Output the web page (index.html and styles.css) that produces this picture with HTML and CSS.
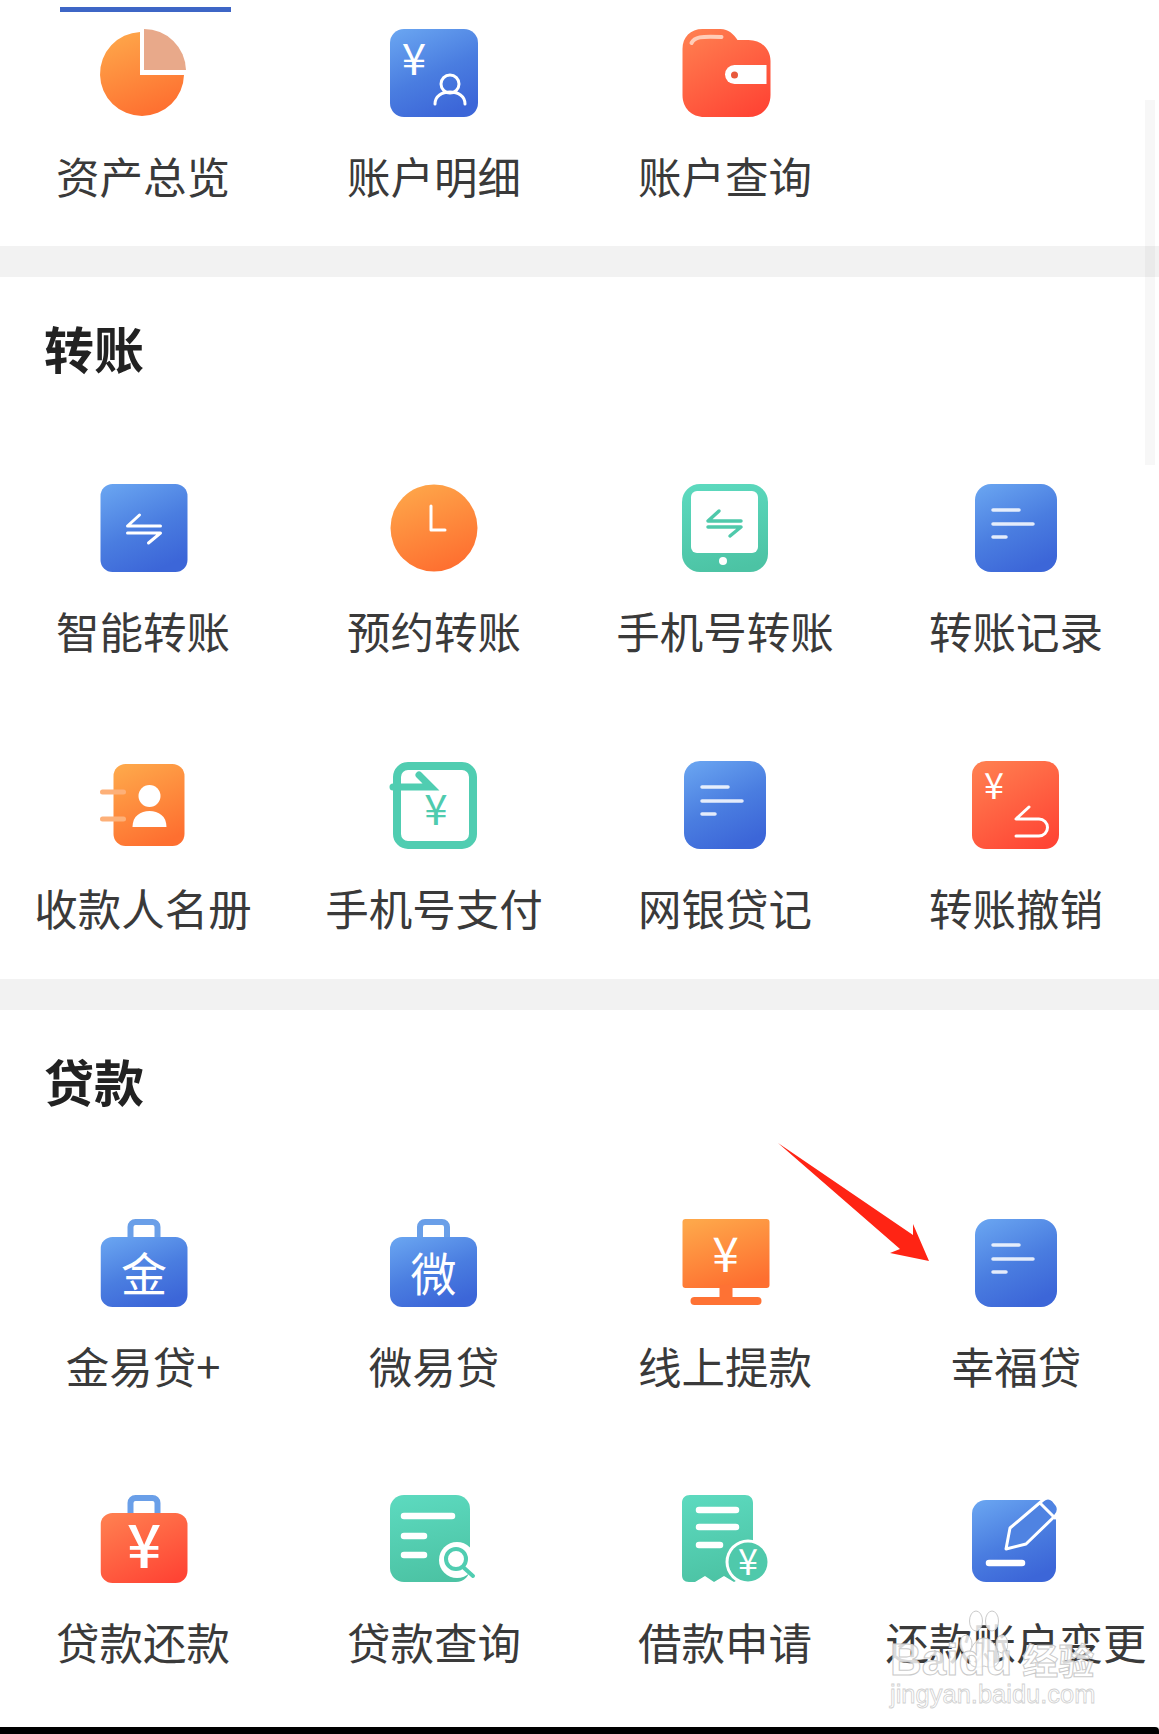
FILE: index.html
```html
<!DOCTYPE html>
<html lang="zh-CN">
<head>
  <meta charset="UTF-8" />
  <meta name="viewport" content="width=device-width, initial-scale=1.0" />
  <title>全部功能</title>
  <link rel="stylesheet" href="styles.css">
</head>
<body>
  <svg class="svg-defs" width="0" height="0" aria-hidden="true">
    <defs>
      <linearGradient id="g-blue" x1="0.15" y1="0" x2="0.6" y2="1">
        <stop offset="0" stop-color="#68a3f0" />
        <stop offset="0.55" stop-color="#4a7de0" />
        <stop offset="1" stop-color="#3c66d8" />
      </linearGradient>
      <linearGradient id="g-orange" x1="0.2" y1="0" x2="0.6" y2="1">
        <stop offset="0" stop-color="#fea74a" />
        <stop offset="1" stop-color="#fe6f30" />
      </linearGradient>
      <linearGradient id="g-red" x1="0.2" y1="0" x2="0.8" y2="1">
        <stop offset="0" stop-color="#ff7d4f" />
        <stop offset="1" stop-color="#ff4434" />
      </linearGradient>
      <linearGradient id="g-teal" x1="0.3" y1="0" x2="0.5" y2="1">
        <stop offset="0" stop-color="#5cd9be" />
        <stop offset="1" stop-color="#4cc3a4" />
      </linearGradient>
      <symbol id="i-doc" viewBox="0 0 88 88">
        <rect x="3" width="82" height="88" rx="16" fill="url(#g-blue)" />
        <path class="line-w soft" d="M21 26H47M21 40H61M21 53H34" />
      </symbol>
      <symbol id="i-case" viewBox="0 0 88 88">
        <rect x="30" y="3" width="27" height="22" rx="5" class="case-handle" />
        <rect y="18" width="87" height="70" rx="12" />
      </symbol>
    </defs>
  </svg>

  <div class="page">
    <section class="panel panel-first">
      <div class="tab-line"></div>
      <div class="grid">
        <div class="item">
          <svg class="icon" viewBox="0 0 88 88">
            <path d="M41 3A42 42 0 1 0 85 46H41Z" fill="url(#g-orange)" />
            <path d="M45 0A42 42 0 0 1 87 41H45Z" fill="#e8a98a" />
          </svg>
          <div class="label">资产总览</div>
        </div>
        <div class="item">
          <svg class="icon" viewBox="0 0 88 88">
            <rect width="88" height="88" rx="14" fill="url(#g-blue)" />
            <text class="glyph" x="24" y="46" font-size="44">¥</text>
            <circle class="line-w thin" cx="60" cy="55" r="9" />
            <path class="line-w thin" d="M45 75C45 67 52 63 60 63S75 67 75 75" />
          </svg>
          <div class="label">账户明细</div>
        </div>
        <div class="item">
          <svg class="icon nudge" viewBox="0 0 88 88">
            <path d="M20 0H38C46 0 51 5 55 11H66C79 11 88 20 88 32V66C88 79 79 88 66 88H22C9 88 0 79 0 66V20C0 8 8 0 20 0Z" fill="url(#g-red)" />
            <path d="M9 14C12 8 18 7 39 8" fill="none" stroke="#ffcdb8" stroke-width="4" stroke-linecap="round" />
            <path d="M84 36H52A9.500 9.500 0 0 0 52 55H84Z" fill="#fff" />
            <circle cx="52" cy="46" r="3.500" fill="#e8593c" />
          </svg>
          <div class="label">账户查询</div>
        </div>
      </div>
    </section>

    <section class="panel">
      <h2 class="panel-title">转账</h2>
      <div class="grid">
        <div class="item">
          <svg class="icon nudge" viewBox="0 0 88 88">
            <rect width="87" height="88" rx="12" fill="url(#g-blue)" />
            <path class="line-w thin" d="M60 42H27L39 31M27 49H60L48 59" />
          </svg>
          <div class="label">智能转账</div>
        </div>
        <div class="item">
          <svg class="icon" viewBox="0 0 88 88">
            <circle cx="44" cy="44" r="43.500" fill="url(#g-orange)" />
            <path class="line-w thin" d="M41 22V46H55" />
          </svg>
          <div class="label">预约转账</div>
        </div>
        <div class="item">
          <svg class="icon" viewBox="0 0 88 88">
            <rect x="1" width="86" height="88" rx="18" fill="url(#g-teal)" />
            <rect x="10" y="7" width="67" height="62" rx="6" fill="#fff" />
            <circle cx="42" cy="77" r="4" fill="#fff" />
            <path class="line-t" d="M60 37H27L38 27M27 43H60L49 52" />
          </svg>
          <div class="label">手机号转账</div>
        </div>
        <div class="item">
          <svg class="icon"><use href="#i-doc" /></svg>
          <div class="label">转账记录</div>
        </div>
        <div class="item">
          <svg class="icon nudge" viewBox="0 0 88 88">
            <rect x="13" y="3" width="71" height="82" rx="12" fill="url(#g-orange)" />
            <path d="M2 31H23M2 58H23" fill="none" stroke="#fdb078" stroke-width="5" stroke-linecap="round" />
            <circle cx="49" cy="35" r="11" fill="#fff" />
            <path d="M32 66C32 55 40 50 49 50S66 55 66 66Z" fill="#fff" />
          </svg>
          <div class="label">收款人名册</div>
        </div>
        <div class="item">
          <svg class="icon" viewBox="0 0 88 88">
            <rect x="7" y="5" width="76" height="79" rx="11" fill="#fff" stroke="#50cdb1" stroke-width="8" />
            <path d="M3 26H41L29 14" fill="none" stroke="#50cdb1" stroke-width="7" stroke-linecap="round" />
            <text class="glyph glyph-teal" x="46" y="64" font-size="42">¥</text>
          </svg>
          <div class="label">手机号支付</div>
        </div>
        <div class="item">
          <svg class="icon"><use href="#i-doc" /></svg>
          <div class="label">网银贷记</div>
        </div>
        <div class="item">
          <svg class="icon" viewBox="0 0 88 88">
            <rect width="87" height="88" rx="14" fill="url(#g-red)" />
            <text class="glyph" x="22" y="38" font-size="36">¥</text>
            <path class="line-w thin" d="M57 46L44 58H67A8.500 8.500 0 0 1 67 75H44" />
          </svg>
          <div class="label">转账撤销</div>
        </div>
      </div>
    </section>

    <section class="panel panel-last">
      <h2 class="panel-title">贷款</h2>
      <div class="grid">
        <div class="item">
          <svg class="icon case-blue nudge"><use href="#i-case" /><text class="glyph" x="43.500" y="72" font-size="46">金</text></svg>
          <div class="label">金易贷+</div>
        </div>
        <div class="item">
          <svg class="icon case-blue"><use href="#i-case" /><text class="glyph" x="43.500" y="72" font-size="46">微</text></svg>
          <div class="label">微易贷</div>
        </div>
        <div class="item">
          <svg class="icon nudge" viewBox="0 0 88 88">
            <rect width="87" height="69" rx="3" fill="url(#g-orange)" />
            <rect x="37" y="66" width="13" height="14" fill="#fe7234" />
            <rect x="8" y="78" width="71" height="8" rx="4" fill="#fe7234" />
            <text class="glyph" x="43" y="53" font-size="48">¥</text>
          </svg>
          <div class="label">线上提款</div>
        </div>
        <div class="item">
          <svg class="icon"><use href="#i-doc" /></svg>
          <div class="label">幸福贷</div>
        </div>
        <div class="item">
          <svg class="icon case-red nudge"><use href="#i-case" /><text class="glyph glyph-bold" x="43.500" y="73" font-size="60">¥</text></svg>
          <div class="label">贷款还款</div>
        </div>
        <div class="item">
          <svg class="icon" viewBox="0 0 88 88">
            <rect width="80" height="87" rx="14" fill="url(#g-teal)" />
            <path class="line-w wide" d="M14 21H62M14 41H34M14 60H34" />
            <circle cx="67" cy="65" r="18" fill="#fff" />
            <circle cx="66" cy="64" r="10" fill="none" stroke="#50cdb1" stroke-width="4" />
            <path d="M73 72L83 81" stroke="#50cdb1" stroke-width="4" stroke-linecap="round" />
          </svg>
          <div class="label">贷款查询</div>
        </div>
        <div class="item">
          <svg class="icon" viewBox="0 0 88 88">
            <path d="M9 0H64C69 0 72 3 72 8V84L62 82L53 87L43 81L33 87L24 81L14 87L8 87C3 87 1 84 1 80V8C1 3 4 0 9 0Z" fill="url(#g-teal)" />
            <path class="line-w wide" d="M18 15H55M18 32H55M18 50H39" />
            <circle cx="67" cy="67" r="22.500" fill="#fff" />
            <circle cx="67" cy="67" r="19.500" fill="#4fc9ab" />
            <text class="glyph" x="67" y="80" font-size="36">¥</text>
          </svg>
          <div class="label">借款申请</div>
        </div>
        <div class="item">
          <svg class="icon" viewBox="0 0 88 88">
            <rect x="0" y="5" width="84" height="82" rx="14" fill="url(#g-blue)" />
            <path d="M34 54L38 33L71 5Q76 1 81 5L85 10Q88 15 84 20L54 49Z" fill="#4f83e2" stroke="#fff" stroke-width="3" stroke-linejoin="round" />
            <path class="line-w thin" d="M68 8L83 23" />
            <path class="line-w wide" d="M17 68H50" />
          </svg>
          <div class="label">还款账户变更</div>
        </div>
      </div>
    </section>
    <div class="bottom-bar"></div>

    <div class="scroll-thumb"></div>

    <svg class="red-arrow" viewBox="0 0 160 124">
      <path d="M0 0L135 92L135 81L151 118L112 110L122 106Z" fill="#ff2414" />
    </svg>

    <div class="watermark">
      <svg class="paw" viewBox="0 0 50 60">
        <ellipse cx="8" cy="34" rx="6" ry="9" />
        <ellipse cx="18" cy="11" rx="6.500" ry="10" />
        <ellipse cx="34" cy="11" rx="6.500" ry="10" />
        <ellipse cx="44" cy="34" rx="6" ry="9" />
        <path d="M26 28C17 28 11 40 11 49C11 58 20 58 26 56C32 58 41 58 41 49C41 40 35 28 26 28Z" />
      </svg>
      <div class="mark-brand">Baidu<span class="mark-cn">经验</span></div>
      <div class="mark-url">jingyan.baidu.com</div>
    </div>
  </div>
</body>
</html>
```

FILE: styles.css
```css
body {
  margin: 0;
  background: #fff;
  color: #3a3a3a;
  font-family: 'Noto Sans CJK SC', 'Noto Sans', sans-serif;
  overflow: hidden;
}

.svg-defs {
  display: block;
}

.page {
  position: relative;
  display: flex;
  flex-direction: column;
  height: 1734px;
  overflow: hidden;
  background: #f2f2f2;
}

.panel {
  margin-bottom: 31px;
  padding: 40px 0 41px;
  background: #fff;
}

.panel-first {
  padding: 7px 0 40px;
}

.panel-last {
  flex: 1;
  margin-bottom: 0;
  padding-bottom: 0;
}

.tab-line {
  width: 171px;
  height: 5px;
  margin: 0 0 17px 60px;
  background: #3e66c6;
}

.panel-title {
  margin: 0 0 107px 44px;
  color: #222;
  font-size: 50px;
  font-weight: 700;
  line-height: 60px;
}

.panel-last .panel-title {
  margin-bottom: 109px;
}

.grid {
  display: grid;
  grid-template-columns: repeat(4, 291px);
  justify-content: center;
  row-gap: 99.5px;
}

.item {
  display: flex;
  flex-direction: column;
  align-items: center;
  gap: 29px;
}

.icon {
  display: block;
  width: 88px;
  height: 88px;
  overflow: visible;
}

.nudge {
  transform: translateX(1.5px);
}

.label {
  font-size: 43.5px;
  line-height: 60px;
  white-space: nowrap;
}

.glyph {
  fill: #fff;
  font-family: 'Noto Sans CJK SC', sans-serif;
  text-anchor: middle;
}

.glyph-teal {
  fill: #4fcbae;
}

.glyph-bold {
  font-weight: 500;
}

.line-w,
.line-t {
  fill: none;
  stroke: #fff;
  stroke-width: 3.5px;
  stroke-linecap: round;
  stroke-linejoin: round;
}

.line-w.soft {
  stroke-opacity: 0.85;
}

.line-w.thin {
  stroke-width: 3px;
}

.line-w.wide {
  stroke-width: 6.5px;
}

.line-t {
  stroke: #4fc9ab;
}

.case-blue {
  fill: url(#g-blue);
}

.case-red {
  fill: url(#g-red);
}

.case-handle {
  fill: #fff;
  stroke: #6a9fe8;
  stroke-width: 6px;
}

.case-red .case-handle {
  stroke: #f98a62;
}

.bottom-bar {
  flex: none;
  height: 7px;
  background: #000;
  border-top-right-radius: 4px;
}

.scroll-thumb {
  position: absolute;
  top: 100px;
  right: 4px;
  width: 10px;
  height: 365px;
  background: rgba(0, 0, 0, 0.03);
}

.red-arrow {
  position: absolute;
  top: 1143px;
  left: 778px;
  width: 160px;
  height: 124px;
}

.watermark {
  position: absolute;
  top: 1610px;
  left: 890px;
  color: rgba(255, 255, 255, 0.82);
  -webkit-text-stroke: 1px #cacaca;
}

.paw {
  display: block;
  width: 50px;
  height: 60px;
  margin: 0 0 -33px 68px;
  fill: rgba(255, 255, 255, 0.82);
  stroke: #cacaca;
  stroke-width: 1px;
}

.mark-brand {
  font-family: 'Liberation Sans', sans-serif;
  font-size: 44px;
  font-weight: 700;
  line-height: 44px;
  white-space: nowrap;
}

.mark-cn {
  margin-left: 10px;
  font-family: 'Noto Sans CJK SC', sans-serif;
  font-size: 36px;
}

.mark-url {
  margin-top: -2px;
  font-family: 'Liberation Sans', sans-serif;
  font-size: 25.5px;
  line-height: 28px;
  white-space: nowrap;
  color: rgba(255, 255, 255, 0.9);
  -webkit-text-stroke: 0.8px #d0d0d0;
}
```
